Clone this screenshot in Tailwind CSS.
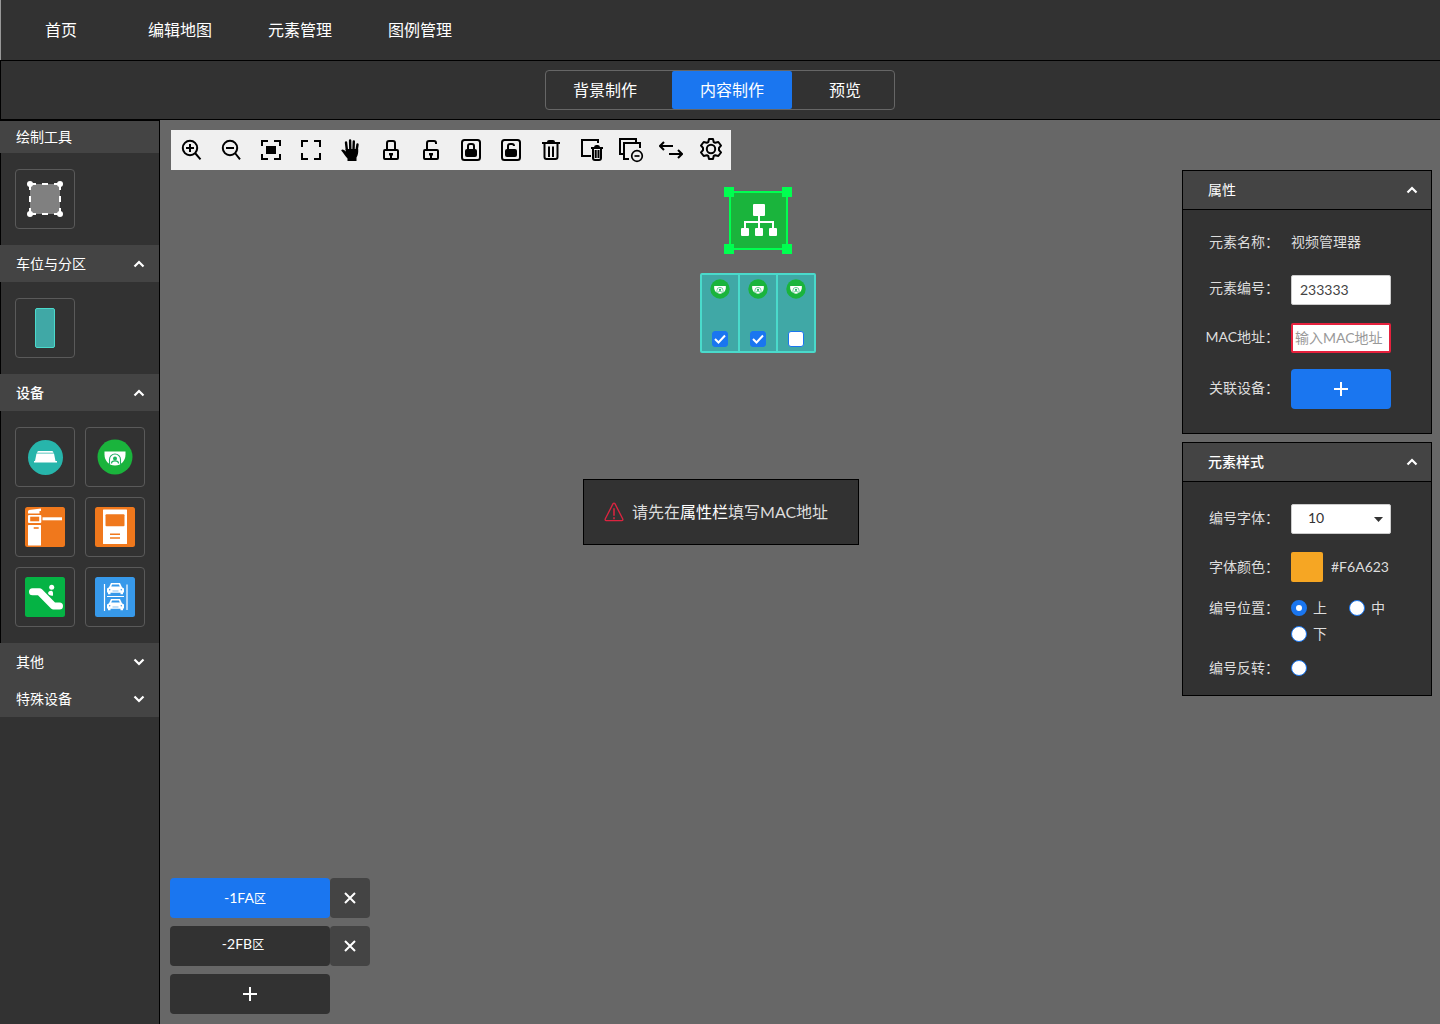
<!DOCTYPE html>
<html lang="zh-CN">
<head>
<meta charset="utf-8">
<title>编辑地图</title>
<script src="https://cdn.jsdelivr.net/npm/@tailwindcss/browser@4"></script>
</head>
<body class="flex min-h-screen flex-col bg-[#676767] font-[Lato,'Noto_Sans_CJK_SC',sans-serif] text-sm text-white">

<svg class="hidden" aria-hidden="true">
  <symbol id="up" viewBox="0 0 12 8"><path d="M1.500 6.500 6 2l4.500 4.500" fill="none" stroke="#fff" stroke-width="2.200"/></symbol>
  <symbol id="down" viewBox="0 0 12 8"><path d="M1.500 1.500 6 6l4.500-4.500" fill="none" stroke="#fff" stroke-width="2.200"/></symbol>
  <symbol id="plus" viewBox="0 0 14 14"><path d="M7 0v14M0 7h14" stroke="#fff" stroke-width="2"/></symbol>
  <symbol id="cross" viewBox="0 0 12 12"><path d="M1 1l10 10M11 1 1 11" stroke="#fff" stroke-width="2"/></symbol>
  <symbol id="camera" viewBox="0 0 36 36">
    <circle cx="18" cy="18" r="17.500" fill="#1ab43c"/>
    <path d="M7.500 12.500h21v3c0 6-4 11-10.500 11S7.500 21.500 7.500 15.500z" fill="#fff"/>
    <path d="M12.500 26v-5.500a5.500 5.500 0 0 1 11 0V26" fill="none" stroke="#22ad64" stroke-width="1.100"/>
    <circle cx="18" cy="19.500" r="2" fill="#1ab45c"/>
    <path d="M14.500 24.500c0-3.500 7-3.500 7 0" fill="none" stroke="#1ab45c" stroke-width="1.200"/>
  </symbol>
  <symbol id="car" viewBox="0 0 18 12">
    <path d="M4.500 0h9l2 4.200 2 1.300v4h-1v1.800h-2.500V9.700H4v1.600H1.500V9.500h-1v-4l2-1.300z" fill="#fff"/>
    <path d="M5.600 1.500h6.800l.9 2H4.700z" fill="#3799ea"/><path d="M6 8h6" stroke="#3799ea" stroke-width=".6"/>
    <circle cx="3.200" cy="6.800" r=".7" fill="#3799ea"/><circle cx="14.800" cy="6.800" r=".7" fill="#3799ea"/>
  </symbol>
</svg>

<nav class="flex h-[60px] items-center border-l border-[#999] bg-[#323232] text-base">
  <a href="#" class="flex w-[120px] justify-center">首页</a>
  <a href="#" class="flex w-[120px] justify-center pr-0.5">编辑地图</a>
  <a href="#" class="flex w-[120px] justify-center pr-0.5">元素管理</a>
  <a href="#" class="flex w-[120px] justify-center pr-0.5">图例管理</a>
</nav>

<div class="flex h-[60px] items-center justify-center border-y border-l border-black bg-[#323232] pr-px text-base">
  <div class="flex h-10 w-[350px] overflow-hidden rounded border border-[#666]">
    <button class="w-[126px] pr-2">背景制作</button>
    <button class="w-[120px] rounded-xs bg-[#1a76f0]">内容制作</button>
    <button class="flex-1 pl-1">预览</button>
  </div>
</div>

<div class="flex flex-1">
  <aside class="w-40 border-t border-r border-black bg-[#323232]">
    <h2 class="flex h-8 items-center bg-[#444] pl-4">绘制工具</h2>
    <div class="border-l border-black pt-4 pb-4 pl-[14px]">
      <button aria-label="绘制区域" class="flex size-[60px] items-center justify-center rounded border border-[#5a5a5a]">
        <svg class="size-10" viewBox="0 0 40 40"><rect x="5" y="5" width="30" height="30" fill="#808080"/><path d="M5 5h30M5 35h30M5 5v30M35 5v30" stroke="#fff" stroke-width="2" stroke-dasharray="6 6"/><g fill="#fff"><circle cx="5" cy="5" r="3"/><circle cx="35" cy="5" r="3"/><circle cx="5" cy="35" r="3"/><circle cx="35" cy="35" r="3"/></g></svg>
      </button>
    </div>
    <button class="flex h-[37px] w-full items-center justify-between bg-[#444] pr-[14px] pl-4">车位与分区<svg class="h-2 w-3"><use href="#up"/></svg></button>
    <div class="border-l border-black pt-4 pb-4 pl-[14px]">
      <button aria-label="车位" class="flex size-[60px] items-center justify-center rounded border border-[#5a5a5a]">
        <span class="h-10 w-5 rounded-xs border border-[#4adacb] bg-[#40a8a6]"></span>
      </button>
    </div>
    <button class="flex h-[37px] w-full items-center justify-between bg-[#444] pr-[14px] pl-4 font-medium">设备<svg class="h-2 w-3"><use href="#up"/></svg></button>
    <div class="grid grid-cols-[60px_60px] gap-[10px] border-l border-black pt-4 pb-4 pl-[14px]">
      <button aria-label="车位指示灯" class="flex size-[60px] items-center justify-center rounded border border-[#5a5a5a]">
        <svg class="size-10" viewBox="0 0 40 40"><circle cx="20.500" cy="20.500" r="17.500" fill="#27b5ab"/><path d="M12.500 14.500q.3-.5 1-.5h13.500q.7 0 1 .5l.5 1.300H12z" fill="#fff"/><path d="M11.500 16.600h17.500l1.500 7.400h1.500v1.500H9V24h1z" fill="#fff"/></svg>
      </button>
      <button aria-label="摄像头" class="flex size-[60px] items-center justify-center rounded border border-[#5a5a5a]">
        <svg class="size-9"><use href="#camera"/></svg>
      </button>
      <button aria-label="道闸" class="flex size-[60px] items-center justify-center rounded border border-[#5a5a5a]">
        <svg class="size-10" viewBox="0 0 40 40"><rect width="40" height="40" rx="2.500" fill="#f0781c"/><g fill="#fff"><path d="M4 3l12-1.500V4h-1.500v2.500H3V4z"/><rect x="3" y="8" width="13.300" height="8" rx="1"/><rect x="3" y="18" width="13" height="20.500" rx=".5"/><rect x="17.500" y="10.300" width="19.500" height="3"/></g><rect x="5.200" y="9.700" width="9" height="4.600" fill="#f0781c"/><rect x="8.700" y="20.200" width="5" height="1.600" fill="#f0781c"/></svg>
      </button>
      <button aria-label="查询机" class="flex size-[60px] items-center justify-center rounded border border-[#5a5a5a]">
        <svg class="size-10" viewBox="0 0 40 40"><rect width="40" height="40" rx="2.500" fill="#f0781c"/><rect x="8" y="2.500" width="24" height="34.500" rx=".5" fill="#fff"/><rect x="10.500" y="7.300" width="19" height="12" rx="1" fill="#f0781c"/><path d="M15 27.300h10M15 31h10" stroke="#f0781c" stroke-width="1.400"/></svg>
      </button>
      <button aria-label="扶梯" class="flex size-[60px] items-center justify-center rounded border border-[#5a5a5a]">
        <svg class="size-10" viewBox="0 0 40 40"><rect width="40" height="40" rx="2.500" fill="#05b344"/><path d="M7.500 14.700h7L28.500 29h6" fill="none" stroke="#fff" stroke-width="7" stroke-linecap="round" stroke-linejoin="round"/><circle cx="26.700" cy="10.300" r="2.500" fill="#fff"/><path d="M23 16c1-2.500 4.500-3 5-.5v3c-1 1-5-.5-5-2.500z" fill="#fff"/></svg>
      </button>
      <button aria-label="双层车位" class="flex size-[60px] items-center justify-center rounded border border-[#5a5a5a]">
        <svg class="size-10" viewBox="0 0 40 40"><rect width="40" height="40" rx="2.500" fill="#3799ea"/><path d="M9.500 7v27M32 7.500v25.500M12 19.500h17" stroke="#fff" stroke-width="1.200"/><use href="#car" x="11.500" y="6" width="18" height="12"/><use href="#car" x="11.500" y="22" width="18" height="12"/></svg>
      </button>
    </div>
    <button class="flex h-[37px] w-full items-center justify-between bg-[#444] pr-[14px] pl-4">其他<svg class="h-2 w-3"><use href="#down"/></svg></button>
    <button class="flex h-[37px] w-full items-center justify-between bg-[#444] pr-[14px] pl-4">特殊设备<svg class="h-2 w-3"><use href="#down"/></svg></button>
  </aside>

  <main class="relative flex flex-1 justify-between p-[10px] pr-2">
    <div class="flex flex-col justify-between">
      <div role="toolbar" aria-label="画布工具" class="ml-px flex h-10 bg-[#f0f0f0] text-black">
        <button aria-label="放大" class="flex size-10 items-center justify-center"><svg class="size-6" viewBox="0 0 24 24" fill="none" stroke="currentColor" stroke-width="2"><circle cx="11" cy="10" r="7.200"/><path d="m16 15 5.500 6.300M7 10h8M11 6v8"/></svg></button>
        <button aria-label="缩小" class="flex size-10 items-center justify-center"><svg class="size-6" viewBox="0 0 24 24" fill="none" stroke="currentColor" stroke-width="2"><circle cx="11" cy="10" r="7.200"/><path d="m16 15 5 6.300M7 10h8"/></svg></button>
        <button aria-label="适应画布" class="flex size-10 items-center justify-center"><svg class="size-6" viewBox="0 0 24 24" fill="none" stroke="currentColor" stroke-width="2"><path d="M3 8V3h6M15 3h6v5M21 16v5h-6M9 21H3v-5"/><path d="M7 8h10v8H7z" fill="currentColor" stroke="none"/></svg></button>
        <button aria-label="全屏" class="flex size-10 items-center justify-center"><svg class="size-6" viewBox="0 0 24 24" fill="none" stroke="currentColor" stroke-width="2"><path d="M3 9V3h6M15 3h6v6M21 15v6h-6M9 21H3v-6"/></svg></button>
        <button aria-label="拖动" class="flex size-10 items-center justify-center"><svg class="size-6" viewBox="0 0 24 24" fill="none" stroke="currentColor" stroke-width="2.400" stroke-linecap="round"><path d="M8 13 7 4.500M11.300 12l-.2-9.500M14.500 12l.3-8.500M17.500 13l1-6.500"/><path d="M6.500 11h12.700c.2 4-.2 6-1.700 8.500V23H8.500v-2.500C6.500 18.500 4.500 15 2.200 12.500c.8-1.700 3-1 5.300 1.500z" fill="currentColor" stroke="none"/></svg></button>
        <button aria-label="锁定" class="flex size-10 items-center justify-center"><svg class="size-6" viewBox="0 0 24 24" fill="none" stroke="currentColor" stroke-width="2"><rect x="5" y="12" width="14" height="9" rx="1"/><path d="M8 12V5q0-2 2-2h4q2 0 2 2v7M12 16v4"/><path d="M10 15h4v2.500h-4z" fill="currentColor" stroke="none"/></svg></button>
        <button aria-label="解锁" class="flex size-10 items-center justify-center"><svg class="size-6" viewBox="0 0 24 24" fill="none" stroke="currentColor" stroke-width="2"><rect x="5" y="12" width="14" height="9" rx="1"/><path d="M8 12V5q0-2 2-2h5q2 0 2 2v1M12 16v4"/><path d="M10 15h4v2.500h-4z" fill="currentColor" stroke="none"/></svg></button>
        <button aria-label="全部锁定" class="flex size-10 items-center justify-center"><svg class="size-6" viewBox="0 0 24 24" fill="none" stroke="currentColor" stroke-width="2"><rect x="3" y="2" width="18" height="20" rx="2.500"/><path d="M9 12V8q0-2 2-2h2q2 0 2 2v4"/><rect x="6" y="11" width="12" height="8" rx="2" fill="currentColor" stroke="none"/></svg></button>
        <button aria-label="全部解锁" class="flex size-10 items-center justify-center"><svg class="size-6" viewBox="0 0 24 24" fill="none" stroke="currentColor" stroke-width="2"><rect x="3" y="2" width="18" height="20" rx="2.500"/><path d="M9 12V8q0-2 2-2h2q2 0 2 2"/><rect x="6" y="11" width="12" height="8" rx="2" fill="currentColor" stroke="none"/></svg></button>
        <button aria-label="删除" class="flex size-10 items-center justify-center"><svg class="size-6" viewBox="0 0 24 24" fill="none" stroke="currentColor" stroke-width="2"><path d="M3 5h18M5.500 6v13q0 2 2 2h9q2 0 2-2V6M10 8.500V19M14 8.500V19"/><path d="M8 4q0-2 2-2h4q2 0 2 2z" fill="currentColor" stroke="none"/></svg></button>
        <button aria-label="清空画布" class="flex size-10 items-center justify-center"><svg class="size-6 overflow-visible" viewBox="0 0 24 24" fill="none" stroke="currentColor" stroke-width="2"><path d="M19 5V2H3v16h9"/><path d="M12 10h12M14 11v9q0 2 2 2h4q2 0 2-2v-9M16.700 12v8M19.500 12v8"/><path d="M15 9.500q0-2.500 2-2.500h2q2 0 2 2.500z" fill="currentColor" stroke="none"/></svg></button>
        <button aria-label="移除图层" class="flex size-10 items-center justify-center"><svg class="size-6 overflow-visible" viewBox="0 0 24 24" fill="none" stroke="currentColor" stroke-width="2"><path d="M4 16H1V1h16v3M21 10V5H5v16h5"/><circle cx="18" cy="18" r="5.300" stroke-width="1.700"/><path d="M15.500 18h5" stroke-width="1.700"/></svg></button>
        <button aria-label="切换方向" class="flex size-10 items-center justify-center"><svg class="size-6" viewBox="0 0 24 24" fill="none" stroke="currentColor" stroke-width="2"><path d="M1 8h13M5 4 1 8l4 4M10 16h13M19 12l4 4-4 4"/></svg></button>
        <button aria-label="设置" class="flex size-10 items-center justify-center"><svg class="size-6" viewBox="0 0 24 24" fill="none" stroke="currentColor" stroke-width="2" stroke-linejoin="round"><path d="M10 1h4l.7 3 1.500.8L19.300 4 22 7.500l-2 2.300v2.400l2 2.300-2.700 3.500-3.100-.8-1.500.8-.7 3h-4l-.7-3-1.500-.8-3.100.8L2 14.500l2-2.300V9.800L2 7.500 4.700 4l3.100.8L9.300 4z"/><circle cx="12" cy="11" r="4.200"/></svg></button>
      </div>

      <div class="flex flex-col gap-2">
        <div class="flex">
          <button class="h-10 w-40 rounded bg-[#1a76f0] pr-[10px]">-1FA<span class="text-xs">区</span></button>
          <button aria-label="关闭 -1FA区" class="flex size-10 items-center justify-center rounded bg-[#444]"><svg class="size-3"><use href="#cross"/></svg></button>
        </div>
        <div class="flex">
          <button class="h-10 w-40 rounded bg-[#323232] pr-[14px] pb-1">-2FB<span class="text-xs">区</span></button>
          <button aria-label="关闭 -2FB区" class="flex size-10 items-center justify-center rounded bg-[#444]"><svg class="size-3"><use href="#cross"/></svg></button>
        </div>
        <button aria-label="添加楼层" class="flex h-10 w-40 items-center justify-center rounded bg-[#323232]"><svg class="size-[14px]"><use href="#plus"/></svg></button>
      </div>
    </div>

    <!-- canvas nodes -->
    <svg class="absolute top-[67px] left-[564px] h-[67px] w-[68px]" viewBox="0 0 68 67" role="img" aria-label="视频管理器">
      <rect x="6" y="5" width="57" height="57" fill="#1ab43c" stroke="#00ff50" stroke-width="2"/>
      <path d="M0 0h10v10H0zM58 0h10v10H58zM0 57h10v10H0zM58 57h10v10H58z" fill="#00ff50"/>
      <path d="M35 28v14M21 42v-7h28v7" fill="none" stroke="#fff" stroke-width="2"/>
      <g fill="#fff"><rect x="29" y="17" width="12" height="12" rx="1"/><rect x="17" y="41" width="8" height="8" rx="1"/><rect x="31" y="41" width="8" height="8" rx="1"/><rect x="45" y="41" width="8" height="8" rx="1"/></g>
    </svg>
    <div class="absolute top-[153px] left-[540px] grid h-20 w-[116px] grid-cols-[38px_38px_36px] divide-x-2 divide-[#4adacb] rounded-xs border-2 border-[#4adacb] bg-[#40a8a6]">
      <label class="flex flex-col items-center justify-between pt-1 pb-1"><svg class="size-5"><use href="#camera"/></svg>
        <span class="relative flex size-4"><input type="checkbox" checked aria-label="车位1" class="size-4 appearance-none rounded-[3px] border border-[#1a76f0] bg-white checked:bg-[#1a76f0]"><svg class="absolute inset-0 size-4" viewBox="0 0 16 16"><path d="m3 8 3.500 3.500L13 4.500" fill="none" stroke="#fff" stroke-width="2"/></svg></span></label>
      <label class="flex flex-col items-center justify-between pt-1 pb-1"><svg class="size-5"><use href="#camera"/></svg>
        <span class="relative flex size-4"><input type="checkbox" checked aria-label="车位2" class="size-4 appearance-none rounded-[3px] border border-[#1a76f0] bg-white checked:bg-[#1a76f0]"><svg class="absolute inset-0 size-4" viewBox="0 0 16 16"><path d="m3 8 3.500 3.500L13 4.500" fill="none" stroke="#fff" stroke-width="2"/></svg></span></label>
      <label class="flex flex-col items-center justify-between pt-1 pb-1"><svg class="size-5"><use href="#camera"/></svg>
        <input type="checkbox" aria-label="车位3" class="size-4 appearance-none rounded-[3px] border border-[#1a76f0] bg-white checked:bg-[#1a76f0]"></label>
    </div>

    <div class="flex w-[250px] flex-col gap-2 pt-10">
      <section class="border border-black bg-[#323232] pb-6 text-[#ddd]">
        <button class="flex h-[39px] w-full items-center justify-between border-b border-black bg-[#444] pr-[13px] pl-[25px] text-white">属性<svg class="h-2 w-3"><use href="#up"/></svg></button>
        <div class="mt-[17px] flex h-[30px] items-center gap-3"><span class="w-24 text-right">元素名称：</span><span>视频管理器</span></div>
        <div class="mt-[18px] flex items-center gap-3"><label for="code" class="w-24 pb-1 text-right">元素编号：</label><input id="code" value="233333" class="h-[30px] w-[100px] rounded-xs border border-[#ccc] bg-white pb-0.5 pl-2 text-[#444]"></div>
        <div class="mt-[18px] flex items-center gap-3"><label for="mac" class="w-24 pb-0.5 text-right">MAC地址：</label><input id="mac" placeholder="输入MAC地址" class="h-[30px] w-[100px] rounded-xs border-2 border-[#e6213d] bg-white pb-0.5 pl-0.5 text-[#444] placeholder:text-[#999]"></div>
        <div class="mt-4 flex items-center gap-3"><span class="w-24 pb-0.5 text-right">关联设备：</span><button aria-label="添加关联设备" class="flex h-10 w-[100px] items-center justify-center rounded bg-[#1a76f0]"><svg class="size-[14px]"><use href="#plus"/></svg></button></div>
      </section>

      <section class="border border-black bg-[#323232] pb-[19px] text-[#ddd]">
        <button class="flex h-[39px] w-full items-center justify-between border-b border-black bg-[#444] pr-[13px] pl-[25px] font-medium text-white">元素样式<svg class="h-2 w-3"><use href="#up"/></svg></button>
        <div class="mt-[22px] flex items-center gap-3"><label for="size" class="w-24 pb-0.5 text-right">编号字体：</label>
          <div class="relative"><select id="size" class="h-[30px] w-[100px] appearance-none rounded-xs border border-[#ccc] bg-white pb-0.5 pl-4 text-[#333]"><option>10</option><option>12</option><option>14</option></select><svg class="pointer-events-none absolute top-[13px] right-2 h-[5px] w-[9px]" viewBox="0 0 9 5"><path d="M0 0h9L4.500 5z" fill="#333"/></svg></div></div>
        <div class="mt-[18px] flex items-center gap-3"><span class="w-24 text-right">字体颜色：</span><div class="flex items-center gap-2"><button aria-label="选择颜色" class="h-[30px] w-8 rounded-xs bg-[#f6a623]"></button><span>#F6A623</span></div></div>
        <div class="mt-[18px] flex gap-3 leading-4"><span class="w-24 text-right">编号位置：</span>
          <div class="grid grid-cols-[58px_58px] gap-y-[10px]">
            <label class="flex items-center gap-[6px]"><input type="radio" name="pos" checked class="size-4 appearance-none rounded-full border border-[#1a76f0] bg-white checked:border-5">上</label>
            <label class="flex items-center gap-[6px]"><input type="radio" name="pos" class="size-4 appearance-none rounded-full border border-[#1a76f0] bg-white checked:border-5">中</label>
            <label class="flex items-center gap-[6px]"><input type="radio" name="pos" class="size-4 appearance-none rounded-full border border-[#1a76f0] bg-white checked:border-5">下</label>
          </div></div>
        <div class="mt-[18px] flex gap-3 leading-4"><label for="flip" class="w-24 text-right">编号反转：</label><input id="flip" type="radio" name="flip" class="size-4 appearance-none rounded-full border border-[#1a76f0] bg-white checked:border-5"></div>
      </section>
    </div>
  </main>
</div>

<div class="pointer-events-none fixed inset-0 flex items-center justify-center pl-0.5">
  <div role="alert" class="flex h-[66px] w-[276px] items-center gap-2 border border-black bg-[#323232] pl-5 text-base text-[#ddd]">
    <svg class="h-5 w-5" viewBox="0 0 21 20" fill="none" stroke="#dc2440"><path d="M9.500 1.300q1-1.200 2 0l8.200 16q.5 1.700-1 1.700H2.300q-1.500 0-1-1.700z" stroke-width="1.400"/><path d="M10.500 6v8M10.500 15.500v2" stroke-width="1.600"/></svg>
    <p>请先在<span class="text-white">属性栏</span>填写MAC地址</p>
  </div>
</div>
</body>
</html>
